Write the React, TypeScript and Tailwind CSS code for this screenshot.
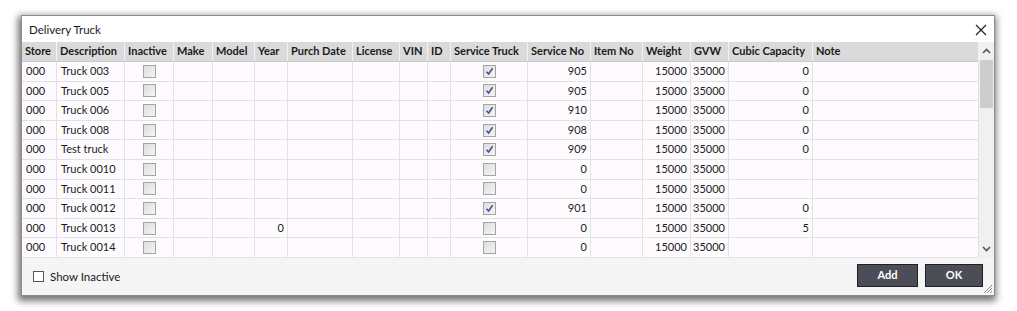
import React from 'react';

type Row = {
  desc: string;
  year?: string;
  service: boolean;
  serviceNo: string;
  cubic?: string;
};

const rows: Row[] = [
  { desc: 'Truck 003', service: true, serviceNo: '905', cubic: '0' },
  { desc: 'Truck 005', service: true, serviceNo: '905', cubic: '0' },
  { desc: 'Truck 006', service: true, serviceNo: '910', cubic: '0' },
  { desc: 'Truck 008', service: true, serviceNo: '908', cubic: '0' },
  { desc: 'Test truck', service: true, serviceNo: '909', cubic: '0' },
  { desc: 'Truck 0010', service: false, serviceNo: '0' },
  { desc: 'Truck 0011', service: false, serviceNo: '0' },
  { desc: 'Truck 0012', service: true, serviceNo: '901', cubic: '0' },
  { desc: 'Truck 0013', year: '0', service: false, serviceNo: '0', cubic: '5' },
  { desc: 'Truck 0014', service: false, serviceNo: '0' },
];

const columns = [
  'Store',
  'Description',
  'Inactive',
  'Make',
  'Model',
  'Year',
  'Purch Date',
  'License',
  'VIN',
  'ID',
  'Service Truck',
  'Service No',
  'Item No',
  'Weight',
  'GVW',
  'Cubic Capacity',
  'Note',
];

const gridCols =
  'grid grid-cols-[35px_68px_49px_39px_42px_33px_65px_47px_28px_23px_77px_63px_52px_48px_38px_84px_166px]';

const CellBox: React.FC<{ checked?: boolean }> = ({ checked }) => (
  <div className="w-[13px] h-[13px] border border-[#a4a4a4] bg-gradient-to-br from-[#dedede] to-[#f4f4f4] flex items-center justify-center">
    {checked && (
      <svg width="9" height="9" viewBox="0 0 9 9">
        <path d="M1.5 4.8 L3.6 7 L7.6 1.2" fill="none" stroke="#3a4f9a" strokeWidth="1.5" />
      </svg>
    )}
  </div>
);

const Cell: React.FC<{ children?: React.ReactNode; align?: 'l' | 'r' | 'c' }> = ({ children, align = 'l' }) => {
  const a = align === 'r' ? 'justify-end pr-[3px]' : align === 'c' ? 'justify-center' : 'justify-start pl-[4px]';
  return <div className={`flex items-center h-full border-r border-b border-[#e3e1e3] overflow-hidden whitespace-nowrap ${a}`}>{children}</div>;
};

export default function App() {
  return (
    <div className="w-[1017px] h-[311px] bg-white pt-[15px] pl-[21px] font-['Lato',sans-serif] text-[#1a1a1a]">
      <div className="w-[974px] h-[281px] bg-white border border-[#8c8c8c] shadow-[-1px_3px_7px_2px_rgba(0,0,0,0.55)] flex flex-col">
        {/* Title */}
        <div className="h-[26px] flex items-center justify-between pl-[7px] pr-[7px]">
          <span className="text-[11.5px] mt-[1px]">Delivery Truck</span>
          <svg width="12" height="12" viewBox="0 0 12 12" className="mt-[1px]">
            <path d="M1 1 L11 11 M11 1 L1 11" stroke="#222" strokeWidth="1.2" />
          </svg>
        </div>

        {/* Grid + scrollbar */}
        <div className="flex h-[216px]">
          <div className="w-[957px] flex flex-col text-[11px]">
            <div className={`${gridCols} h-[20px] bg-[#dadada] font-bold`}>
              {columns.map((c) => (
                <div key={c} className="flex items-center pl-[3px] border-r border-[#f2f2f2] border-b border-b-[#c8c8c8] whitespace-nowrap overflow-hidden">
                  {c}
                </div>
              ))}
            </div>
            <div className="flex-1 bg-[#fdfbfd] overflow-hidden">
              {rows.map((r, i) => (
                <div key={i} className={`${gridCols} h-[19.6px]`}>
                  <Cell>000</Cell>
                  <Cell>{r.desc}</Cell>
                  <Cell align="c">
                    <CellBox />
                  </Cell>
                  <Cell />
                  <Cell />
                  <Cell align="r">{r.year}</Cell>
                  <Cell />
                  <Cell />
                  <Cell />
                  <Cell />
                  <Cell align="c">
                    <CellBox checked={r.service} />
                  </Cell>
                  <Cell align="r">{r.serviceNo}</Cell>
                  <Cell />
                  <Cell align="r">15000</Cell>
                  <Cell align="r">35000</Cell>
                  <Cell align="r">{r.cubic}</Cell>
                  <Cell />
                </div>
              ))}
            </div>
          </div>

          {/* Scrollbar */}
          <div className="w-[17px] bg-[#f0f0f0] flex flex-col items-center">
            <div className="h-[18px] flex items-center justify-center">
              <svg width="9" height="6" viewBox="0 0 9 6">
                <path d="M1 5 L4.5 1.5 L8 5" fill="none" stroke="#555" strokeWidth="1.6" />
              </svg>
            </div>
            <div className="w-[13px] h-[48px] bg-[#cdcdcd]" />
            <div className="flex-1" />
            <div className="h-[18px] flex items-center justify-center">
              <svg width="9" height="6" viewBox="0 0 9 6">
                <path d="M1 1 L4.5 4.5 L8 1" fill="none" stroke="#555" strokeWidth="1.6" />
              </svg>
            </div>
          </div>
        </div>

        {/* Footer */}
        <div className="flex-1 bg-[#f5f5f5] flex items-start justify-between pl-[11px] pr-[11px] pt-[6px] relative">
          <label className="flex items-center gap-[6px] text-[11.5px] mt-[4px]">
            <span className="w-[11px] h-[11px] border border-[#555] bg-white" />
            <span>Show Inactive</span>
          </label>
          <div className="flex gap-[7px]">
            <button className="w-[61px] h-[23px] bg-[#4b4e57] border border-[#1f2024] text-white text-[11px] font-bold">Add</button>
            <button className="w-[58px] h-[23px] bg-[#4b4e57] border border-[#1f2024] text-white text-[11px] font-bold">OK</button>
          </div>
          <svg width="11" height="11" viewBox="0 0 11 11" className="absolute right-[1px] bottom-[1px]">
            <path d="M10 2 L2 10 M10 5 L5 10 M10 8 L8 10" stroke="#8a8a8a" strokeWidth="1" />
          </svg>
        </div>
      </div>
    </div>
  );
}
